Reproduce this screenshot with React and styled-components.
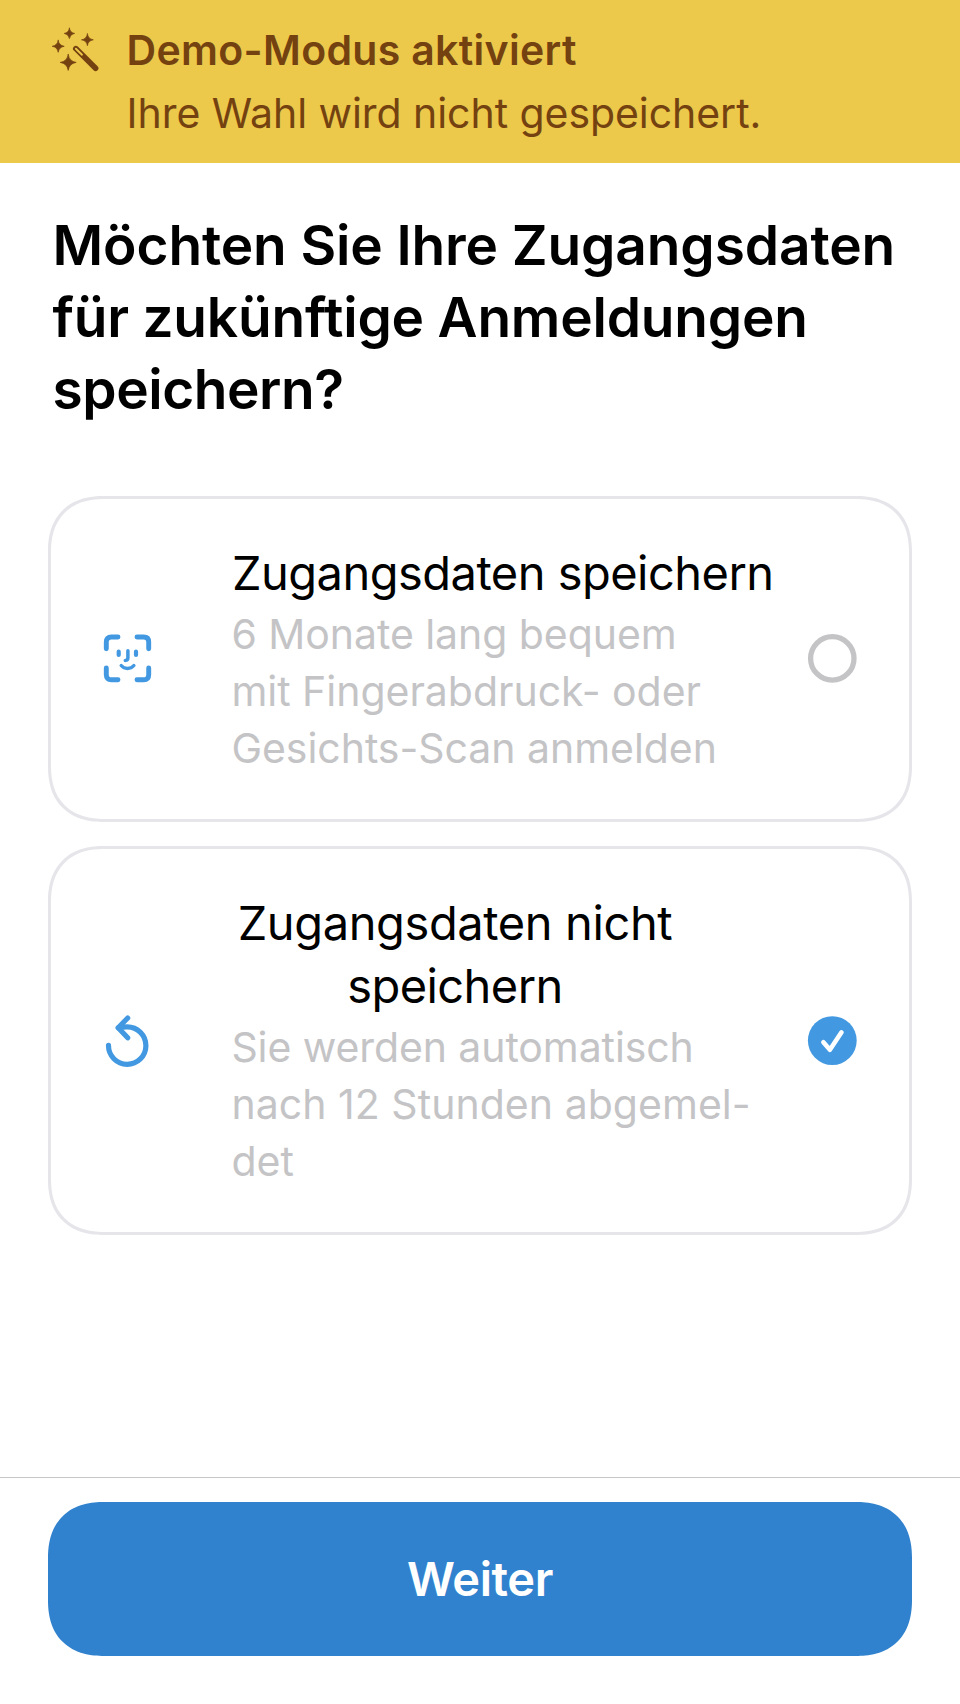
import React, { useState } from 'react';
import styled, { createGlobalStyle, css } from 'styled-components';

const GlobalStyle = createGlobalStyle`
  *, *::before, *::after { box-sizing: border-box; }
  html, body { margin: 0; padding: 0; background: #fff; }
  body { font-family: Inter, "Liberation Sans", sans-serif; color: #000; }
`;

const smoothCorners = css`
  border-radius: 48px;
  @supports (corner-shape: superellipse(1.2)) {
    border-radius: 56px;
    corner-shape: superellipse(1.22);
  }
`;

const Screen = styled.div`
  display: flex;
  flex-direction: column;
  width: 960px;
  height: 1704px;
  background: #fff;
  overflow: hidden;
`;

const Banner = styled.header`
  display: flex;
  align-items: flex-start;
  gap: 22.6px;
  flex: none;
  height: 163px;
  padding: 19px 48px 0;
  background: #ecc94b;
  color: #744210;
`;

const BannerIcon = styled.svg`
  flex: none;
  width: 56px;
  height: 56px;
  margin-top: 1px;
`;

const BannerText = styled.div`
  font-size: 41px;
  line-height: 63px;
  white-space: nowrap;
`;

const Line = styled.span`
  display: block;
  letter-spacing: ${(p) => p.$tracking || 0}px;
  font-weight: ${(p) => (p.$strong ? 600 : 'inherit')};
`;

const Content = styled.main`
  flex: 1;
  padding: 46px 48px 0;
`;

const Heading = styled.h1`
  margin: 0 0 71px;
  padding-left: 4.5px;
  font-size: 55px;
  font-weight: 600;
  line-height: 72px;
  white-space: nowrap;
  font-variant-ligatures: none;
`;

const Options = styled.div`
  display: flex;
  flex-direction: column;
  gap: 24px;
`;

const OptionCard = styled.button`
  display: flex;
  align-items: center;
  width: 100%;
  margin: 0;
  padding: 42px 52px 42px 46px;
  border: 3px solid #e5e5ea;
  background: #fff;
  color: inherit;
  font: inherit;
  text-align: left;
  ${smoothCorners}
`;

const OptionIcon = styled.svg`
  flex: none;
  width: 60px;
  height: 60px;
  margin-right: 74px;
  color: #4299e1;
`;

const OptionBody = styled.span`
  flex: 1;
  min-width: 0;
  white-space: nowrap;
`;

const OptionTitle = styled.span`
  display: block;
  width: fit-content;
  margin: 0 0 2px ${(p) => p.$inset}px;
  font-size: 47px;
  line-height: 63px;
  text-align: center;
`;

const OptionHint = styled.span`
  display: block;
  padding-left: 0.4px;
  font-size: 41px;
  line-height: 57px;
  color: #c4c4c6;
`;

const Radio = styled.svg`
  flex: none;
  width: 50px;
  height: 50px;
`;

const Footer = styled.footer`
  flex: none;
  height: 227px;
  padding: 24px 48px 0;
  border-top: 1px solid #c6c6c8;
`;

const PrimaryButton = styled.button`
  display: block;
  width: 100%;
  height: 154px;
  padding: 0 0 2px;
  border: 0;
  background: #3182ce;
  color: #fff;
  font-family: inherit;
  font-size: 47px;
  font-weight: 600;
  line-height: 63px;
  letter-spacing: -0.4px;
  ${smoothCorners}
`;

const star = (x, y, r) => {
  const c = r * 0.13;
  return `M${x} ${y - r}Q${x + c} ${y - c} ${x + r} ${y}Q${x + c} ${y + c} ${x} ${y + r}Q${x - c} ${y + c} ${x - r} ${y}Q${x - c} ${y - c} ${x} ${y - r}Z`;
};

function WandIcon() {
  return (
    <BannerIcon viewBox="0 0 56 56" fill="currentColor" stroke="currentColor" strokeLinecap="round" strokeLinejoin="round">
      <g strokeWidth="0.7">
        <path d={star(21.4, 13.4, 5.2)} />
        <path d={star(39.4, 19.8, 5.9)} />
        <path d={star(10.2, 26.3, 6)} />
        <path d={star(20.2, 42.4, 8)} />
      </g>
      <path d="M27.8 28.6L47.6 48.2" strokeWidth="5.6" />
      <path d="M27.9 28.7L34 34.7" stroke="#ecc94b" strokeWidth="1.9" />
    </BannerIcon>
  );
}

function FaceIcon() {
  return (
    <OptionIcon viewBox="0 0 60 60" fill="none" stroke="currentColor" strokeLinecap="round" strokeLinejoin="round">
      <path
        strokeWidth="4.9"
        d="M9.3 19.7V13Q9.3 8 14.3 8H21M40 8H46.7Q51.7 8 51.7 13V19.7M51.7 39V45.7Q51.7 50.7 46.7 50.7H40M21 50.7H14.3Q9.3 50.7 9.3 45.7V39"
      />
      <path strokeWidth="4.2" d="M21.7 22.7V26M39 22.7V26" />
      <path strokeWidth="3.5" d="M30.9 21.8V28.8Q30.9 31.4 28.3 31.4" />
      <path strokeWidth="3.4" d="M24.2 36.5C27.4 40.4 33.6 40.4 36.9 36.5" />
    </OptionIcon>
  );
}

function ResetIcon() {
  return (
    <OptionIcon viewBox="0 0 60 60" fill="none" stroke="currentColor" strokeWidth="5.2" strokeLinecap="round" strokeLinejoin="round">
      <path d="M11.5 34.4A18.7 18.7 0 1 0 30.2 15.9Q25.5 15.9 21.3 16.8" />
      <path d="M30.7 7L21.2 16.7L30.7 26.8" />
    </OptionIcon>
  );
}

function RadioMark({ checked }) {
  return checked ? (
    <Radio viewBox="0 0 50 50">
      <circle cx="25.3" cy="24.6" r="24.4" fill="#4299e1" />
      <path d="M16.4 26.2L22.9 33.7L34.5 16.3" fill="none" stroke="#fff" strokeWidth="4.6" strokeLinecap="round" strokeLinejoin="round" />
    </Radio>
  ) : (
    <Radio viewBox="0 0 50 50">
      <circle cx="25.3" cy="24.4" r="21.7" fill="none" stroke="#c4c4c6" strokeWidth="5.3" />
    </Radio>
  );
}

const options = [
  {
    id: 'save',
    Icon: FaceIcon,
    inset: 1,
    title: [['Zugangsdaten speichern', -0.52]],
    hint: [['6 Monate lang bequem', -0.05], ['mit Fingerabdruck- oder', -0.02], ['Gesichts-Scan anmelden', -0.04]],
  },
  {
    id: 'discard',
    Icon: ResetIcon,
    inset: 6.7,
    title: [['Zugangsdaten nicht', -0.39], ['speichern', -0.58]],
    hint: [['Sie werden automatisch', -0.09], ['nach 12 Stunden abgemel-', 0.04], ['det', 0]],
  },
];

const renderLines = (lines) =>
  lines.map(([text, tracking]) => (
    <Line key={text} $tracking={tracking}>{text}</Line>
  ));

export default function App() {
  const [selected, setSelected] = useState('discard');
  return (
    <>
      <GlobalStyle />
      <Screen>
        <Banner>
          <WandIcon />
          <BannerText>
            <Line $strong $tracking={0.32}>Demo-Modus aktiviert</Line>
            <Line $tracking={-0.06}>Ihre Wahl wird nicht gespeichert.</Line>
          </BannerText>
        </Banner>
        <Content>
          <Heading>
            <Line $tracking={-0.12}>Möchten Sie Ihre Zugangsdaten</Line>
            <Line $tracking={-0.2}>für zukünftige Anmeldungen</Line>
            <Line $tracking={-0.45}>speichern?</Line>
          </Heading>
          <Options role="radiogroup">
            {options.map(({ id, Icon, inset, title, hint }) => (
              <OptionCard key={id} type="button" role="radio" aria-checked={selected === id} onClick={() => setSelected(id)}>
                <Icon />
                <OptionBody>
                  <OptionTitle $inset={inset}>{renderLines(title)}</OptionTitle>
                  <OptionHint>{renderLines(hint)}</OptionHint>
                </OptionBody>
                <RadioMark checked={selected === id} />
              </OptionCard>
            ))}
          </Options>
        </Content>
        <Footer>
          <PrimaryButton type="button">Weiter</PrimaryButton>
        </Footer>
      </Screen>
    </>
  );
}
